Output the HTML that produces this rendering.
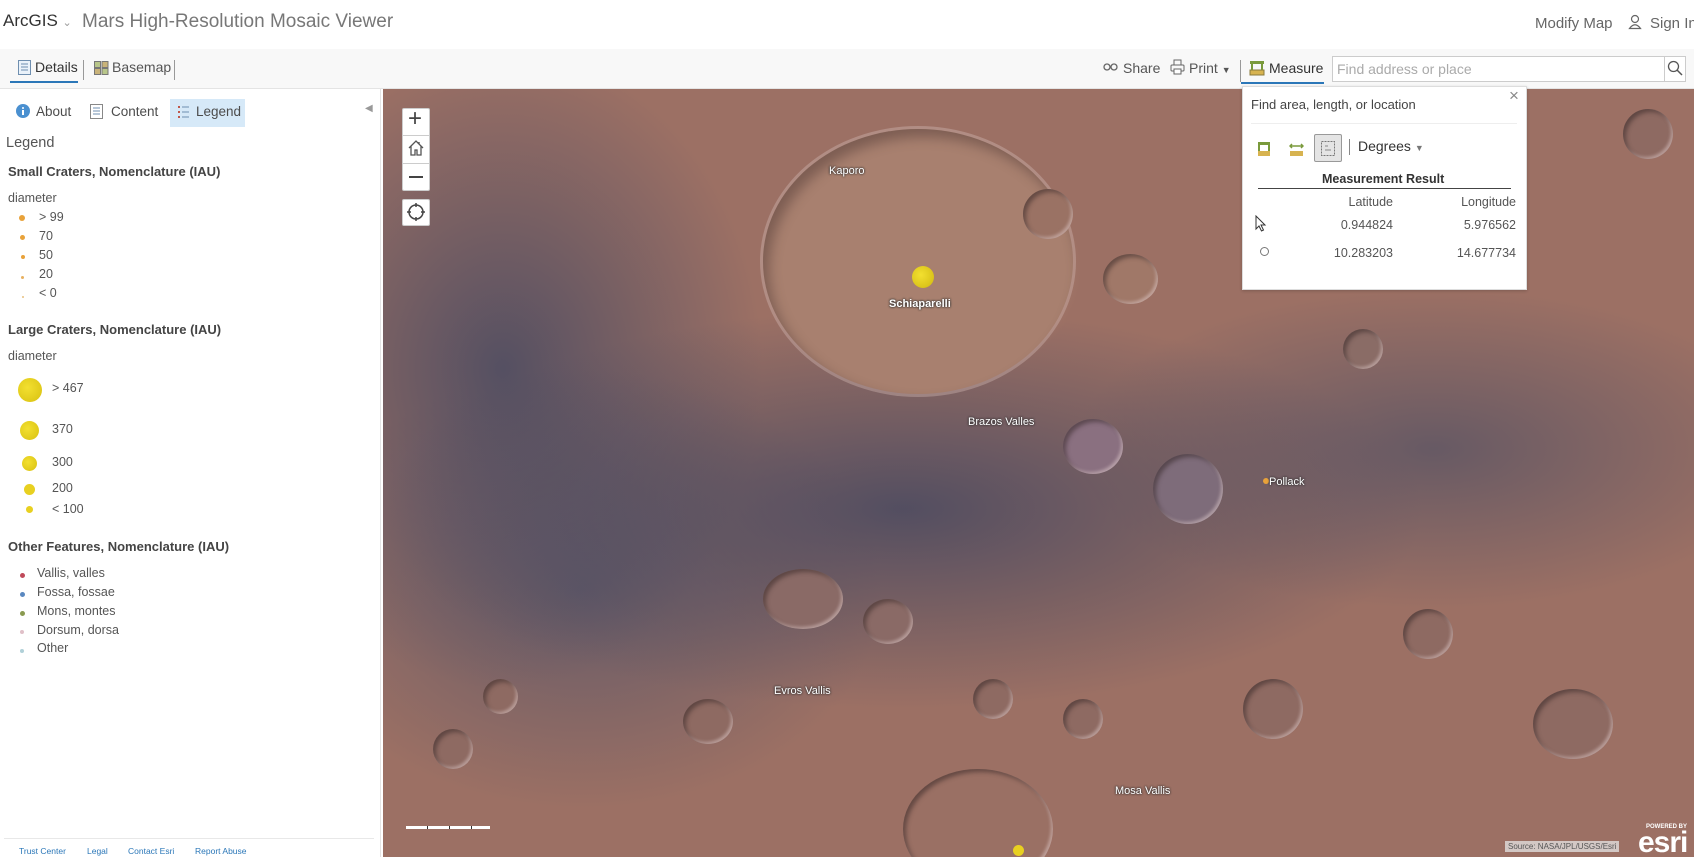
<!DOCTYPE html>
<html><head><meta charset="utf-8"><style>
*{margin:0;padding:0;box-sizing:border-box}
body{width:1694px;height:864px;overflow:hidden;background:#fff;font-family:"Liberation Sans",sans-serif;color:#4c4c4c;position:relative}
.a{position:absolute;white-space:nowrap}
.hdr{top:0;left:0;width:1694px;height:49px;background:#fff}
.tb{top:49px;left:0;width:1694px;height:40px;background:#f8f8f8;border-bottom:1px solid #e4e4e4}
.map{left:383px;top:89px;width:1311px;height:768px;overflow:hidden;
background:
radial-gradient(ellipse 160px 120px at 540px 180px,#a67b6c 0,#a67b6c 70%,rgba(0,0,0,0) 100%),
radial-gradient(ellipse 520px 200px at 520px 420px,rgba(70,72,96,.85),rgba(70,72,96,0) 100%),
radial-gradient(ellipse 260px 320px at 120px 280px,rgba(72,74,98,.85),rgba(72,74,98,0) 100%),
radial-gradient(ellipse 360px 160px at 1050px 360px,rgba(80,80,100,.7),rgba(80,80,100,0) 100%),
radial-gradient(ellipse 300px 220px at 200px 500px,rgba(80,82,104,.7),rgba(80,82,104,0) 100%),
#9c7064}
.cr{position:absolute;border-radius:50%;box-shadow:inset 3px 3px 4px rgba(50,35,35,.5),inset -2px -2px 3px rgba(230,210,210,.5)}
.lbl{position:absolute;color:#fff;font-size:11px;text-shadow:0 0 2px #333,0 0 2px #333;font-weight:bold}
.sb{font-size:13px;color:#4c4c4c}
.leg{font-size:12.5px;color:#555}
.dot{position:absolute;border-radius:50%}
</style></head><body>
<div class="a hdr"></div>
<div class="a" style="left:3px;top:11px;font-size:17px;color:#333">ArcGIS <span style="font-size:11px;color:#999">⌄</span></div>
<div class="a" style="left:82px;top:11px;font-size:19px;color:#777">Mars High-Resolution Mosaic Viewer</div>
<div class="a" style="left:1535px;top:15px;font-size:15px;color:#666">Modify Map</div>
<svg class="a" style="left:1628px;top:14px" width="14" height="16" viewBox="0 0 14 16"><circle cx="7" cy="5" r="3.5" fill="none" stroke="#666" stroke-width="1.2"/><path d="M1.5 14.5 Q7 7 12.5 14.5 Z" fill="none" stroke="#666" stroke-width="1.2"/></svg>
<div class="a" style="left:1650px;top:15px;font-size:15px;color:#666">Sign In</div>

<div class="a tb"></div>
<svg class="a" style="left:18px;top:60px" width="13" height="15"><rect x=".5" y=".5" width="12" height="14" fill="#eaf2fa" stroke="#6f8fb0"/><path d="M3 4h7M3 7h7M3 10h7" stroke="#6f8fb0"/></svg>
<div class="a" style="left:35px;top:59px;font-size:14px;color:#333">Details</div>
<div class="a" style="left:10px;top:81px;width:68px;height:2px;background:#2b77b8"></div>
<div class="a" style="left:83px;top:60px;width:1px;height:20px;background:#999"></div>
<svg class="a" style="left:94px;top:61px" width="15" height="14"><rect x=".5" y=".5" width="6" height="6" fill="#b8c68a" stroke="#777"/><rect x="8" y=".5" width="6" height="6" fill="#c9b37a" stroke="#777"/><rect x=".5" y="7.5" width="6" height="6" fill="#c9b37a" stroke="#777"/><rect x="8" y="7.5" width="6" height="6" fill="#b8c68a" stroke="#777"/></svg>
<div class="a" style="left:112px;top:59px;font-size:14px;color:#555">Basemap</div>
<div class="a" style="left:174px;top:60px;width:1px;height:20px;background:#999"></div>

<svg class="a" style="left:1103px;top:63px" width="15" height="9"><rect x="1" y="1" width="6" height="6" rx="3" fill="none" stroke="#666" stroke-width="1.3"/><rect x="8" y="1" width="6" height="6" rx="3" fill="none" stroke="#666" stroke-width="1.3"/></svg>
<div class="a" style="left:1123px;top:60px;font-size:14px;color:#555">Share</div>
<svg class="a" style="left:1170px;top:59px" width="15" height="16"><rect x="4" y="1" width="7" height="5" fill="none" stroke="#666"/><rect x="1" y="6" width="13" height="6" rx="1" fill="none" stroke="#666"/><rect x="4" y="10" width="7" height="5" fill="#fff" stroke="#666"/></svg>
<div class="a" style="left:1189px;top:60px;font-size:14px;color:#555">Print <span style="font-size:9px">▼</span></div>
<div class="a" style="left:1240px;top:60px;width:1px;height:22px;background:#999"></div>
<svg class="a" style="left:1249px;top:60px" width="16" height="16"><rect x="1" y="1" width="14" height="3" fill="#7a9a3c"/><rect x="1" y="10" width="14" height="5" fill="#d7b350" stroke="#8a7a3c"/><path d="M3 4v6M13 4v6" stroke="#7a9a3c" stroke-width="2"/></svg>
<div class="a" style="left:1269px;top:60px;font-size:14px;color:#333">Measure</div>
<div class="a" style="left:1241px;top:82px;width:83px;height:2px;background:#2b77b8"></div>
<div class="a" style="left:1332px;top:56px;width:354px;height:26px;background:#fff;border:1px solid #ccc"></div>
<div class="a" style="left:1337px;top:61px;font-size:14px;color:#aaa">Find address or place</div>
<div class="a" style="left:1664px;top:56px;width:1px;height:26px;background:#ccc"></div>
<svg class="a" style="left:1667px;top:60px" width="16" height="16"><circle cx="6.5" cy="6.5" r="5" fill="none" stroke="#555" stroke-width="1.3"/><path d="M10 10l5 5" stroke="#555" stroke-width="1.5"/></svg>

<!-- side panel -->
<div class="a" style="left:380px;top:89px;width:1px;height:775px;background:#e4e4e4"></div>
<svg class="a" style="left:16px;top:104px" width="14" height="14"><circle cx="7" cy="7" r="7" fill="#4a90d0"/><rect x="6" y="6" width="2" height="5" fill="#fff"/><circle cx="7" cy="4" r="1" fill="#fff"/></svg>
<div class="a sb" style="left:36px;top:104px;font-size:13.5px">About</div>
<svg class="a" style="left:90px;top:104px" width="13" height="15"><rect x=".5" y=".5" width="12" height="14" fill="#fff" stroke="#888"/><path d="M3 4h7M3 7h7M3 10h7" stroke="#6f8fb0"/></svg>
<div class="a sb" style="left:111px;top:104px;font-size:13.5px">Content</div>
<div class="a" style="left:170px;top:99px;width:75px;height:28px;background:#d6e9f8"></div>
<svg class="a" style="left:177px;top:105px" width="12" height="14"><path d="M1 2h2M1 7h2M1 12h2" stroke="#c0574a" stroke-width="2"/><path d="M5 2h7M5 7h7M5 12h7" stroke="#6f8fb0"/></svg>
<div class="a sb" style="left:196px;top:104px;font-size:13.5px">Legend</div>
<div class="a" style="left:365px;top:103px;font-size:10px;color:#999">◀</div>
<div class="a" style="left:6px;top:135px;font-size:14.5px;color:#555">Legend</div>
<div class="a" style="left:8px;top:164px;font-size:13px;color:#444;font-weight:bold">Small Craters, Nomenclature (IAU)</div>
<div class="a leg" style="left:8px;top:191px">diameter</div>
<div class="dot" style="left:19px;top:215px;width:6px;height:6px;background:#e8a23a"></div><div class="a leg" style="left:39px;top:210px">&gt; 99</div>
<div class="dot" style="left:20px;top:235px;width:5px;height:5px;background:#e8a23a"></div><div class="a leg" style="left:39px;top:229px">70</div>
<div class="dot" style="left:21px;top:255px;width:4px;height:4px;background:#e8a23a"></div><div class="a leg" style="left:39px;top:248px">50</div>
<div class="dot" style="left:21px;top:276px;width:3px;height:3px;background:#e8b060"></div><div class="a leg" style="left:39px;top:267px">20</div>
<div class="dot" style="left:22px;top:296px;width:2px;height:2px;background:#e8c080"></div><div class="a leg" style="left:39px;top:286px">&lt; 0</div>

<div class="a" style="left:8px;top:322px;font-size:13px;color:#444;font-weight:bold">Large Craters, Nomenclature (IAU)</div>
<div class="a leg" style="left:8px;top:349px">diameter</div>
<div class="dot" style="left:18px;top:378px;width:24px;height:24px;background:radial-gradient(circle at 40% 40%,#f3e030,#d8c010)"></div><div class="a leg" style="left:52px;top:381px">&gt; 467</div>
<div class="dot" style="left:20px;top:421px;width:19px;height:19px;background:radial-gradient(circle at 40% 40%,#f3e030,#d8c010)"></div><div class="a leg" style="left:52px;top:422px">370</div>
<div class="dot" style="left:22px;top:456px;width:15px;height:15px;background:radial-gradient(circle at 40% 40%,#f3e030,#d8c010)"></div><div class="a leg" style="left:52px;top:455px">300</div>
<div class="dot" style="left:24px;top:484px;width:11px;height:11px;background:#e8d020"></div><div class="a leg" style="left:52px;top:481px">200</div>
<div class="dot" style="left:26px;top:506px;width:7px;height:7px;background:#e8d020"></div><div class="a leg" style="left:52px;top:502px">&lt; 100</div>

<div class="a" style="left:8px;top:539px;font-size:13px;color:#444;font-weight:bold">Other Features, Nomenclature (IAU)</div>
<div class="dot" style="left:20px;top:573px;width:5px;height:5px;background:#c04a5a"></div><div class="a leg" style="left:37px;top:566px">Vallis, valles</div>
<div class="dot" style="left:20px;top:592px;width:5px;height:5px;background:#5a88c0"></div><div class="a leg" style="left:37px;top:585px">Fossa, fossae</div>
<div class="dot" style="left:20px;top:611px;width:5px;height:5px;background:#8a9a50"></div><div class="a leg" style="left:37px;top:604px">Mons, montes</div>
<div class="dot" style="left:20px;top:630px;width:4px;height:4px;background:#e0c0c8"></div><div class="a leg" style="left:37px;top:623px">Dorsum, dorsa</div>
<div class="dot" style="left:20px;top:649px;width:4px;height:4px;background:#b0d0d8"></div><div class="a leg" style="left:37px;top:641px">Other</div>
<div class="a" style="left:4px;top:838px;width:370px;height:1px;background:#e8e8e8"></div>
<div class="a" style="left:19px;top:846px;font-size:8.5px;color:#2b77b8">Trust Center</div>
<div class="a" style="left:87px;top:846px;font-size:8.5px;color:#2b77b8">Legal</div>
<div class="a" style="left:128px;top:846px;font-size:8.5px;color:#2b77b8">Contact Esri</div>
<div class="a" style="left:195px;top:846px;font-size:8.5px;color:#2b77b8">Report Abuse</div>

<!-- map -->
<div class="a map">
 <div class="cr" style="left:380px;top:40px;width:310px;height:265px;background:#a8806f;box-shadow:inset 6px 8px 12px rgba(60,40,40,.4),0 0 0 3px rgba(210,185,180,.4)"></div>
 <div class="cr" style="left:680px;top:330px;width:60px;height:55px;background:#8a7080"></div>
 <div class="cr" style="left:770px;top:365px;width:70px;height:70px;background:#7e6c7a"></div>
 <div class="cr" style="left:960px;top:240px;width:40px;height:40px;background:#8a6c66"></div>
 <div class="cr" style="left:720px;top:165px;width:55px;height:50px;background:#a07868"></div>
 <div class="cr" style="left:640px;top:100px;width:50px;height:50px;background:#9a7264"></div>
 <div class="cr" style="left:380px;top:480px;width:80px;height:60px;background:#8a6a66"></div>
 <div class="cr" style="left:480px;top:510px;width:50px;height:45px;background:#8a6a66"></div>
 <div class="cr" style="left:860px;top:590px;width:60px;height:60px;background:#8e6a62"></div>
 <div class="cr" style="left:590px;top:590px;width:40px;height:40px;background:#8e6a62"></div>
 <div class="cr" style="left:1150px;top:600px;width:80px;height:70px;background:#8e6a62"></div>
 <div class="cr" style="left:1020px;top:520px;width:50px;height:50px;background:#8e6a62"></div>
 <div class="cr" style="left:1240px;top:20px;width:50px;height:50px;background:#8e6a62"></div>
 <div class="cr" style="left:300px;top:610px;width:50px;height:45px;background:#8e6a62"></div>
 <div class="cr" style="left:50px;top:640px;width:40px;height:40px;background:#8e6a62"></div>
 <div class="cr" style="left:680px;top:610px;width:40px;height:40px;background:#8e6a62"></div>
 <div class="cr" style="left:100px;top:590px;width:35px;height:35px;background:#8e6a62"></div>
 <div class="cr" style="left:520px;top:680px;width:150px;height:120px;background:#9a7064"></div>
 <div class="dot" style="left:529px;top:177px;width:22px;height:22px;background:radial-gradient(circle at 40% 40%,#f3e030,#d0b810)"></div>
 <div class="dot" style="left:630px;top:756px;width:11px;height:11px;background:#e8d020"></div>
 <div class="dot" style="left:880px;top:389px;width:6px;height:6px;background:#e8a23a"></div>
 <div class="lbl" style="left:446px;top:76px;font-weight:normal">Kaporo</div>
 <div class="lbl" style="left:506px;top:209px">Schiaparelli</div>
 <div class="lbl" style="left:585px;top:327px;font-weight:normal">Brazos Valles</div>
 <div class="lbl" style="left:886px;top:387px;font-weight:normal">Pollack</div>
 <div class="lbl" style="left:391px;top:596px;font-weight:normal">Evros Vallis</div>
 <div class="lbl" style="left:732px;top:696px;font-weight:normal">Mosa Vallis</div>
 <div class="a" style="left:23px;top:737px;width:84px;height:3px;background:repeating-linear-gradient(90deg,#fff 0 21px,#333 21px 22px)"></div>
 <div class="a" style="left:1122px;top:752px;font-size:8px;color:#555;background:rgba(230,230,230,.75);padding:1px 3px">Source: NASA/JPL/USGS/Esri</div>
 <div class="a" style="left:1263px;top:735px;font-size:6px;color:#fff;font-weight:bold">POWERED BY</div>
 <div class="a" style="left:1255px;top:737px;font-size:30px;color:#fff;font-weight:bold;letter-spacing:-1px">esri</div>
 <div class="a" style="left:19px;top:19px;width:28px;height:83px;background:#fff;border-radius:2px;border:1px solid #ccc"></div>
 <div class="a" style="left:19px;top:46px;width:28px;height:1px;background:#ccc"></div>
 <div class="a" style="left:19px;top:74px;width:28px;height:1px;background:#ccc"></div>
 <div class="a" style="left:25px;top:16px;font-size:24px;color:#444">+</div>
 <svg class="a" style="left:24px;top:50px" width="18" height="18"><path d="M2 9L9 2l7 7M4 7v9h4v-5h2v5h4V7M12 3v2" fill="none" stroke="#555" stroke-width="1.3"/></svg>
 <div class="a" style="left:26px;top:87px;width:14px;height:2px;background:#444"></div>
 <div class="a" style="left:19px;top:110px;width:28px;height:27px;background:#fff;border-radius:2px;border:1px solid #ccc"></div>
 <svg class="a" style="left:24px;top:114px" width="18" height="18"><circle cx="9" cy="9" r="7" fill="none" stroke="#444" stroke-width="1.5"/><path d="M9 0v4M9 14v4M0 9h4M14 9h4" stroke="#444" stroke-width="1.5"/></svg>
</div>
<div class="a" style="left:0;top:857px;width:1694px;height:7px;background:#fff"></div>

<!-- measure popup -->
<div class="a" style="left:1242px;top:86px;width:285px;height:204px;background:#fff;border:1px solid #ddd;box-shadow:0 1px 3px rgba(0,0,0,.2)"></div>
<div class="a" style="left:1251px;top:97px;font-size:13px;color:#444">Find area, length, or location</div>
<div class="a" style="left:1509px;top:86px;font-size:17px;color:#888">×</div>
<div class="a" style="left:1251px;top:123px;width:266px;height:1px;background:#eee"></div>
<svg class="a" style="left:1257px;top:141px" width="14" height="16"><rect x="1" y="1" width="12" height="3" fill="#7a9a3c"/><rect x="1" y="10" width="12" height="5" fill="#d7b350"/><path d="M2 4v6M12 4v6" stroke="#7a9a3c" stroke-width="2"/></svg>
<svg class="a" style="left:1289px;top:141px" width="15" height="16"><path d="M1 5h13M3 3l-2 2 2 2M12 3l2 2-2 2" stroke="#7a9a3c" fill="none" stroke-width="1.5"/><rect x="1" y="10" width="13" height="5" fill="#d7b350"/></svg>
<div class="a" style="left:1314px;top:134px;width:28px;height:28px;background:#e4e4e4;border:1px solid #999;border-radius:2px"></div>
<svg class="a" style="left:1321px;top:141px" width="14" height="15"><rect x=".5" y=".5" width="13" height="14" fill="none" stroke="#777" stroke-dasharray="2 1"/><path d="M4 5h3M4 9h6" stroke="#888"/></svg>
<div class="a" style="left:1349px;top:139px;width:1px;height:16px;background:#888"></div>
<div class="a" style="left:1358px;top:138px;font-size:14px;color:#333">Degrees <span style="font-size:9px;color:#777">▼</span></div>
<div class="a" style="left:1322px;top:172px;font-size:12.5px;color:#333;font-weight:bold">Measurement Result</div>
<div class="a" style="left:1258px;top:188px;width:253px;height:1px;background:#444"></div>
<div class="a" style="left:1313px;top:195px;font-size:12.5px;color:#555;width:80px;text-align:right">Latitude</div>
<div class="a" style="left:1436px;top:195px;font-size:12.5px;color:#555;width:80px;text-align:right">Longitude</div>
<svg class="a" style="left:1255px;top:215px" width="12" height="17"><path d="M1 1v13l3-3 2.5 5 2-1-2.5-5h4z" fill="#fff" stroke="#333"/></svg>
<div class="a" style="left:1313px;top:218px;font-size:12.5px;color:#555;width:80px;text-align:right">0.944824</div>
<div class="a" style="left:1436px;top:218px;font-size:12.5px;color:#555;width:80px;text-align:right">5.976562</div>
<div class="a" style="left:1260px;top:247px;width:9px;height:9px;border:1.3px solid #777;border-radius:50%"></div>
<div class="a" style="left:1313px;top:246px;font-size:12.5px;color:#555;width:80px;text-align:right">10.283203</div>
<div class="a" style="left:1436px;top:246px;font-size:12.5px;color:#555;width:80px;text-align:right">14.677734</div>
</body></html>
